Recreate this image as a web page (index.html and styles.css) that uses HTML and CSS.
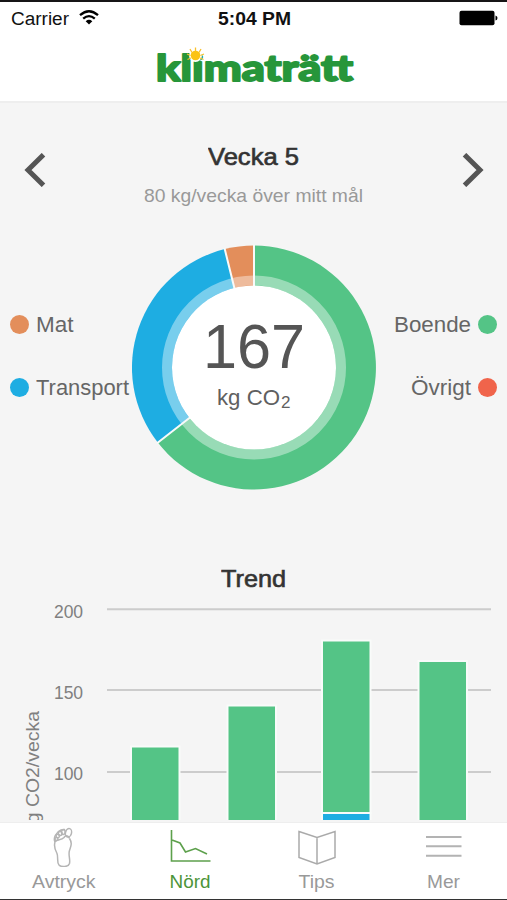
FILE: index.html
```html
<!DOCTYPE html>
<html lang="sv">
<head>
<meta charset="utf-8">
<title>Klimaträtt</title>
<link rel="stylesheet" href="styles.css">
</head>
<body>
<div class="app">
  <header class="header">
    <div class="status">
      <div class="status-left"><svg class="carrier" width="68" height="20"><text x="0" y="16" textLength="58" lengthAdjust="spacingAndGlyphs">Carrier</text></svg>
        <svg class="wifi" width="20" height="15" viewBox="0 0 20 15"><g fill="none" stroke="#000" stroke-width="2.3"><path d="M1 5.2Q10-2.8 19 5.2"/><path d="M4.2 8.7Q10 3.5 15.8 8.7"/></g><path d="M6.7 11.2Q10 8.4 13.3 11.2L10 14.4Z"/></svg>
      </div>
      <svg class="time" width="74" height="20"><text x="0" y="16" textLength="73" lengthAdjust="spacingAndGlyphs">5:04 PM</text></svg>
      <svg class="battery" width="39" height="16" viewBox="0 0 39 16"><rect x=".5" y=".7" width="35" height="14.5" rx="2"/><path d="M36.500 5.500Q38.500 6 38.500 8T36.500 10.500Z"/></svg>
    </div>
    <svg class="logo" width="210" height="44" viewBox="0 0 210 44">
      <text x="6" y="37" textLength="197" lengthAdjust="spacingAndGlyphs">klimaträtt</text>
      <circle cx="45.500" cy="11.500" r="6.500" fill="#fff"/>
      <g stroke="#f8c02c" stroke-width="1.300"><path d="M45.500 3.500v4M40 5l2 3.500M51 5l-2 3.500M37 10l3.500 1.500M54 10l-3.500 1.500M37.500 15.500l3.500-1.500M53.500 15.500l-3.500-1.500"/></g>
      <circle cx="45.500" cy="11.500" r="4.800" fill="#fbc313"/>
    </svg>
  </header>
  <main class="content">
    <section class="week">
      <svg class="arrow" width="22" height="34" viewBox="0 0 22 34"><path d="M19.500 1.700L4 17L19.500 32.300"/></svg>
      <div class="week-text">
        <svg width="92" height="28"><text class="heading" x="0" y="22" textLength="91" lengthAdjust="spacingAndGlyphs">Vecka 5</text></svg>
        <svg class="goal" width="220" height="26"><text x="0" y="19" textLength="219" lengthAdjust="spacingAndGlyphs">80 kg/vecka över mitt mål</text></svg>
      </div>
      <svg class="arrow" width="22" height="34" viewBox="0 0 22 34"><path d="M2.500 1.700L18 17L2.500 32.300"/></svg>
    </section>
    <section class="breakdown">
      <div class="legend">
        <div class="item"><i class="dot food"></i><svg width="38" height="28"><text x="0" y="22" textLength="37.500" lengthAdjust="spacingAndGlyphs">Mat</text></svg></div>
        <div class="item"><i class="dot transport"></i><svg width="94" height="28"><text x="0" y="22" textLength="93" lengthAdjust="spacingAndGlyphs">Transport</text></svg></div>
      </div>
      <svg class="donut" width="246" height="246" viewBox="-123 -123.500 246 246">
        <path fill="#54c486" d="M0 0V-122A122 122 0 1 1 -96.200 75.100Z"/>
        <path fill="#1eade2" d="M0 0L-96.200 75.100A122 122 0 0 1 -29.300 -118.400Z"/>
        <path fill="#e38e5b" d="M0 0L-29.300 -118.400A122 122 0 0 1 0 -122Z"/>
        <circle r="87" fill="none" stroke="#fff" stroke-opacity=".4" stroke-width="10"/>
        <path d="M0 0V-123M0 0L-97 75.700M0 0L-29.500 -119.400" stroke="#f8faf9" stroke-width="2"/>
        <circle r="82" fill="#fff"/>
        <text class="total" x="-51" y="0" textLength="102" lengthAdjust="spacingAndGlyphs">167</text>
        <text class="unit" x="-37" y="37" textLength="63" lengthAdjust="spacingAndGlyphs">kg CO</text>
        <text class="sub" x="27" y="40.500" textLength="9.500" lengthAdjust="spacingAndGlyphs">2</text>
      </svg>
      <div class="legend right">
        <div class="item"><svg width="78" height="28"><text x="0" y="22" textLength="77" lengthAdjust="spacingAndGlyphs">Boende</text></svg><i class="dot home"></i></div>
        <div class="item"><svg width="61" height="28"><text x="0" y="22" textLength="60" lengthAdjust="spacingAndGlyphs">Övrigt</text></svg><i class="dot other"></i></div>
      </div>
    </section>
    <section class="trend">
      <svg class="trend-title" width="66" height="28"><text class="heading" x="0" y="22" textLength="65" lengthAdjust="spacingAndGlyphs">Trend</text></svg>
      <svg class="chart" width="507" height="226" viewBox="0 596 507 226">
        <path d="M107 609.300H491M107 690H491M107 772H491" stroke="#ccc" stroke-width="2"/>
        <g class="ticks"><text x="54" y="617.500" textLength="29">200</text><text x="54" y="698.500" textLength="29">150</text><text x="54" y="779.500" textLength="29">100</text></g>
        <text class="axis" transform="translate(38.500 833) rotate(-90)" textLength="122" lengthAdjust="spacingAndGlyphs">kg CO2/vecka</text>
        <g fill="#54c486" stroke="#f9fbfa" stroke-width="2"><path d="M131 746.500h48.500v90h-48.500zM227.500 705.500h48.500v130h-48.500zM322 640.500h48.500v172.500h-48.500zM418.500 661h48.500v170h-48.500z"/><path fill="#1eade2" d="M322 813h48.500v20h-48.500z"/></g>
        <path fill="#f5f5f5" d="M0 820h507v2H0z"/>
      </svg>
    </section>
  </main>
  <nav class="tabs">
    <div class="tab"><svg class="icon" width="44" height="44" viewBox="0 0 44 44"><g fill="none" stroke="#b5b5b5" stroke-width="1.500"><path d="M14 19C12.500 24 14 27 16 30.500C17.500 34 15.500 39 18 42C20.500 44.500 27.500 44 28.500 40.500C29.500 36 27 32 28.500 27.500C30 23 31.500 20 28.500 15.500"/><path d="M14 19C16 15.500 20 18 23 14.500C25 11.500 28 13 28.500 15.500"/><ellipse cx="27.500" cy="9.800" rx="3" ry="4.300" transform="rotate(15 27.500 9.800)"/><path d="M14 19C12 15 15 9 20 7L24 6.500"/><circle cx="15.500" cy="16" r="1.500"/><circle cx="16.800" cy="13" r="1.700"/><circle cx="19.200" cy="10.500" r="1.900"/><ellipse cx="22.300" cy="9" rx="1.800" ry="2.400"/></g></svg><svg class="label" width="65" height="24"><text x="1" y="17" textLength="63.500" lengthAdjust="spacingAndGlyphs">Avtryck</text></svg></div>
    <div class="tab active"><svg class="icon" width="44" height="44" viewBox="0 0 44 44"><path d="M3.500 7V38H42.500M4 17L12 20L17.500 29L27.500 25.500L39 31" fill="none" stroke="#5da04c" stroke-width="1.600"/></svg><svg class="label" width="42" height="24"><text x=".5" y="17" textLength="41" lengthAdjust="spacingAndGlyphs">Nörd</text></svg></div>
    <div class="tab"><svg class="icon" width="44" height="44" viewBox="0 0 44 44"><path d="M4 8.500L22 14.500L40 8.500V34.500L22 41L4 34.500ZM22 14.500V41" fill="none" stroke="#aaa" stroke-width="1.500"/></svg><svg class="label" width="37" height="24"><text x=".5" y="17" textLength="36" lengthAdjust="spacingAndGlyphs">Tips</text></svg></div>
    <div class="tab"><svg class="icon" width="44" height="44" viewBox="0 0 44 44"><path d="M4 14H39.500M4 23.300H39.500M4 32.700H39.500" stroke="#b3b3b3" stroke-width="2"/></svg><svg class="label" width="34" height="24"><text x="0" y="17" textLength="33" lengthAdjust="spacingAndGlyphs">Mer</text></svg></div>
  </nav>
</div>
</body>
</html>
```
FILE: styles.css
```css
* { box-sizing: border-box; }
body { margin: 0; font-family: "Liberation Sans", Arial, sans-serif; }
svg { display: block; flex: none; }
.app { width: 507px; height: 900px; display: flex; flex-direction: column; background: #f5f5f5; border-top: 2px solid #161516; border-bottom: 1px solid #333; overflow: hidden; }
.header { height: 101px; flex: none; background: #fff; border-bottom: 2px solid #eee; }
.status { height: 42px; display: grid; grid-template-columns: 1fr 74px 1fr; align-items: start; padding: 7px 9px 0 11px; font-size: 18px; }
.status-left { display: flex; }
.status text { font-size: 18px; fill: #111; }
.status .time text { font-weight: bold; }
.wifi { margin-top: 1px; }
.battery { justify-self: end; margin-top: 1px; }
.logo { margin-left: 150px; }
.logo text { font: 900 36px Lato, sans-serif; fill: #27963a; stroke: #27963a; stroke-width: 1.8px; stroke-linejoin: round; }
.content { height: 719px; flex: none; }
.week { height: 142px; display: flex; justify-content: space-between; padding: 50px 23px 0 24px; }
.arrow { fill: none; stroke: #555; stroke-width: 5; }
.week-text { display: flex; flex-direction: column; align-items: center; margin-top: -10px; }
.heading { font-size: 24.5px; fill: #333; stroke: #333; stroke-width: .65px; }
.goal { margin-top: 12px; }
.goal text { font-size: 19px; fill: #999; }
.breakdown { height: 246px; display: grid; grid-template-columns: 131px 246px 130px; margin-top: -1px; }
.legend { display: flex; flex-direction: column; gap: 35px; padding: 66px 0 0 10px; }
.item { display: flex; align-items: center; gap: 7px; }
.item text { font-size: 22px; fill: #666; }
.right { align-items: flex-end; padding: 66px 10px 0 0; }
.right .item { gap: 6px; }
.dot { width: 19px; height: 19px; border-radius: 50%; flex: none; }
.food { background: #e38e5b; }
.transport { background: #1eade2; }
.home { background: #54c486; }
.other { background: #f0644b; }
.total { font-size: 63px; fill: #555; }
.unit { font-size: 22px; fill: #606060; }
.sub { font-size: 16px; fill: #606060; }
.trend { padding-top: 75px; }
.trend-title { margin-left: 221px; }
.chart { margin-top: 3px; }
.ticks { font-size: 17.500px; fill: #808080; }
.axis { font-size: 19px; fill: #808080; }
.tabs { height: 77px; flex: none; display: flex; background: #fff; border-top: 1px solid #eee; }
.tab { flex: 1; display: flex; flex-direction: column; align-items: center; }
.icon { margin-top: 0; }
.label { margin-top: 4px; }
.label text { font-size: 19px; fill: #999; }
.active .label text { fill: #4c9439; }
```
